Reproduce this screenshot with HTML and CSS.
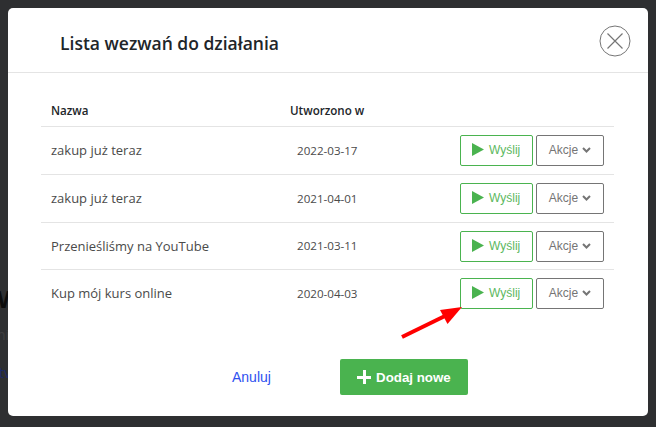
FILE: index.html
```html
<!DOCTYPE html>
<html lang="en">
<head>
  <meta charset="UTF-8">
  <meta name="viewport" content="width=device-width, initial-scale=1.0">
  <title>Lista wezwań do działania</title>
  <link rel="stylesheet" href="styles.css">
</head>
<body>

<div class="page-behind">
  <span class="behind-heading">W</span>
  <span class="behind-text">ni</span>
  <span class="behind-link">tv</span>
</div>

<div class="modal">
  <div class="modal-header">
    <h2 class="modal-title">Lista wezwań do działania</h2>
    <button class="close" aria-label="Zamknij">
      <svg width="32" height="32" viewBox="0 0 32 32" fill="none" stroke="#757575">
        <circle cx="16" cy="16" r="15"/>
        <path d="M8.5 8.5 23.5 23.5M23.5 8.5 8.5 23.5" stroke-width="1.2"/>
      </svg>
    </button>
  </div>

  <div class="modal-body">
    <table class="list">
      <thead>
        <tr>
          <th class="col-name">Nazwa</th>
          <th class="col-date">Utworzono w</th>
          <th></th>
        </tr>
      </thead>
      <tbody>
        <tr>
          <td>zakup już teraz</td>
          <td class="date">2022-03-17</td>
          <td class="actions">
            <button class="btn-send"><svg class="play" width="12" height="13" viewBox="0 0 12 13"><path d="M0 0 12 6.5 0 13z"/></svg>Wyślij</button>
            <button class="btn-more">Akcje<svg class="chev" width="9" height="6" viewBox="0 0 9 6"><path d="M1 1 4.500 4.500 8 1" /></svg></button>
          </td>
        </tr>
        <tr>
          <td>zakup już teraz</td>
          <td class="date">2021-04-01</td>
          <td class="actions">
            <button class="btn-send"><svg class="play" width="12" height="13" viewBox="0 0 12 13"><path d="M0 0 12 6.5 0 13z"/></svg>Wyślij</button>
            <button class="btn-more">Akcje<svg class="chev" width="9" height="6" viewBox="0 0 9 6"><path d="M1 1 4.500 4.500 8 1" /></svg></button>
          </td>
        </tr>
        <tr class="row-short">
          <td>Przenieśliśmy na YouTube</td>
          <td class="date">2021-03-11</td>
          <td class="actions">
            <button class="btn-send"><svg class="play" width="12" height="13" viewBox="0 0 12 13"><path d="M0 0 12 6.5 0 13z"/></svg>Wyślij</button>
            <button class="btn-more">Akcje<svg class="chev" width="9" height="6" viewBox="0 0 9 6"><path d="M1 1 4.500 4.500 8 1" /></svg></button>
          </td>
        </tr>
        <tr>
          <td>Kup mój kurs online</td>
          <td class="date">2020-04-03</td>
          <td class="actions">
            <button class="btn-send"><svg class="play" width="12" height="13" viewBox="0 0 12 13"><path d="M0 0 12 6.5 0 13z"/></svg>Wyślij</button>
            <button class="btn-more">Akcje<svg class="chev" width="9" height="6" viewBox="0 0 9 6"><path d="M1 1 4.500 4.500 8 1" /></svg></button>
          </td>
        </tr>
      </tbody>
    </table>
  </div>

  <div class="modal-footer">
    <a class="cancel" href="#">Anuluj</a>
    <button class="btn-add"><span class="plus"></span>Dodaj nowe</button>
  </div>

  <!-- red arrow pointing at the last send button -->
  <svg class="arrow" width="64" height="34" viewBox="0 0 64 34">
    <path d="M2 31 47 9" stroke="#f00" stroke-width="4" fill="none"/>
    <path d="M62 1 40 4 47.500 18z" fill="#f00"/>
  </svg>
</div>

</body>
</html>
```

FILE: styles.css
```css
* {
  box-sizing: border-box;
}
body {
  margin: 0;
  height: 427px;
  overflow: hidden;
  padding: 8px;
  background-color: #2e2f31;
  font-family: "Open Sans", sans-serif;
}
.page-behind span {
  position: absolute;
  left: -3px;
}
.behind-heading {
  top: 282px;
  font: bold 24px "Open Sans", sans-serif;
  color: #0c0c0c;
}
.behind-text {
  top: 325px;
  font-size: 14px;
  color: #3f3f40;
}
.page-behind .behind-link {
  left: -1px;
  top: 363px;
  font-size: 14px;
  color: #1c2a66;
}
.modal {
  position: relative;
  width: 640px;
  height: 408px;
  background-color: #fff;
  border-radius: 5px;
  display: flex;
  flex-direction: column;
}
.modal-header {
  height: 65px;
  flex: none;
  display: flex;
  align-items: center;
  justify-content: space-between;
  padding: 0 18px 0 52px;
  border-bottom: 1px solid #e4e4e4;
}
.modal-title {
  margin: 5px 0 0;
  font-size: 17.500px;
  font-weight: 600;
  color: #212529;
}
.close {
  width: 32px;
  height: 32px;
  padding: 0;
  border: none;
  background: none;
  margin: 1px -1px 0 0;
}
.close svg {
  display: block;
}
.modal-body {
  padding: 26px 34px 0 33px;
}
.list {
  width: 100%;
  border-collapse: collapse;
  font-size: 13px;
  color: #4a4a4a;
}
.list th {
  height: 27px;
  padding: 0 0 3px;
  text-align: left;
  font-size: 11.600px;
  font-weight: 600;
  color: #212529;
  border-bottom: 1px solid #e4e4e4;
}
.list td {
  height: 48px;
  padding: 0;
  border-bottom: 1px solid #e4e4e4;
}
.list .row-short td {
  height: 47px;
}
.list .row-short .actions {
  padding-top: 1px;
}
.list tr:last-child td {
  border-bottom: none;
}
.col-name {
  width: 249px;
  padding-left: 10px !important;
}
.list td:first-child {
  padding-left: 10px;
}
.col-date {
  width: 120px;
}
.date {
  padding-left: 7px !important;
  font-size: 11.600px;
}
.actions {
  text-align: right;
  padding-right: 10px !important;
}
.actions button {
  height: 31px;
  font-family: "Liberation Sans", Arial, sans-serif;
  font-size: 12px;
  background: #fff;
  border-radius: 2px;
  padding: 0;
  vertical-align: middle;
}
.btn-send {
  width: 73px;
  border: 1px solid #4ab34f;
  color: #5cb860;
}
.play {
  fill: #4ab34f;
  margin-right: 5px;
  vertical-align: -2px;
}
.btn-more {
  width: 68px;
  border: 1px solid #757575;
  color: #757575;
}
.chev {
  margin-left: 4px;
  vertical-align: 1px;
  fill: none;
  stroke: #757575;
  stroke-width: 2;
}
.modal-footer {
  display: flex;
  align-items: center;
  margin-top: 42px;
  padding-left: 224px;
}
.cancel {
  font-family: "Liberation Sans", Arial, sans-serif;
  font-size: 14px;
  color: #2e50f0;
  text-decoration: none;
}
.btn-add {
  margin-left: 69px;
  width: 128px;
  height: 36px;
  background-color: #4ab34f;
  color: #fff;
  border: none;
  border-radius: 2px;
  font-family: "Liberation Sans", Arial, sans-serif;
  font-size: 13.300px;
  font-weight: bold;
  padding: 0;
  display: flex;
  align-items: center;
  justify-content: center;
  gap: 5px;
}
.plus {
  width: 14px;
  height: 14px;
  background:
    linear-gradient(#fff, #fff) center / 100% 3px no-repeat,
    linear-gradient(#fff, #fff) center / 3px 100% no-repeat;
}
.arrow {
  position: absolute;
  left: 392px;
  top: 298px;
}
```
